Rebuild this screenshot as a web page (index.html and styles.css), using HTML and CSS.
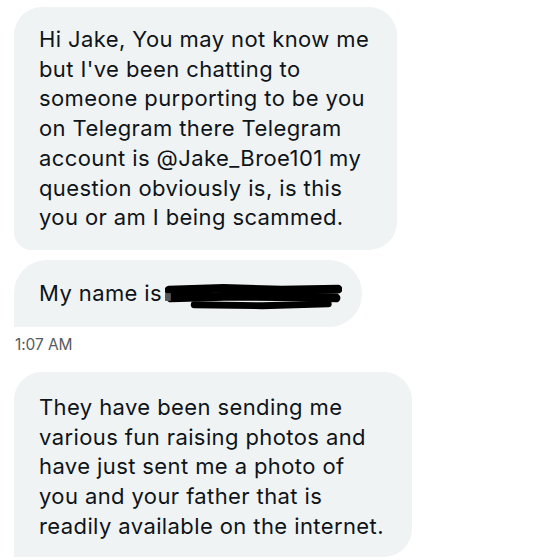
FILE: index.html
```html
<!DOCTYPE html>
<html>
	<head>
		<meta charset="utf-8" />
		<title>Messages</title>
		<link rel="stylesheet" href="styles.css">
	</head>
	<body>
		<div class="chat">
			<div class="bubble first">
				Hi Jake, You may not know me<br>
				but I've been chatting to<br>
				someone purporting to be you<br>
				on Telegram there Telegram<br>
				account is @Jake_Broe101 my<br>
				question obviously is, is this<br>
				you or am I being scammed.
			</div>
			<div class="bubble name">
				<span>My name is</span>
				<svg class="redact" width="182" height="32" viewBox="0 0 182 32">
					<path d="M4 9 L60 7 L120 9 L178 8" stroke="#000" stroke-width="9" fill="none" stroke-linecap="round" />
					<path d="M6 17 L70 15 L140 16 L176 17" stroke="#000" stroke-width="9" fill="none" stroke-linecap="round" />
					<path d="M30 24 L100 25 L168 23" stroke="#000" stroke-width="7" fill="none" stroke-linecap="round" />
					<rect x="0" y="12" width="6" height="8" fill="#555" />
				</svg>
			</div>
			<div class="time">1:07 AM</div>
			<div class="bubble last">
				They have been sending me<br>
				various fun raising photos and<br>
				have just sent me a photo of<br>
				you and your father that is<br>
				readily available on the internet.
			</div>
		</div>
	</body>
</html>
```

FILE: styles.css
```css
* {
	margin: 0;
	padding: 0;
	box-sizing: border-box;
}

body {
	background: #fff;
	font-family: Inter, "Noto Sans", sans-serif;
	color: #0f1419;
}

.chat {
	display: flex;
	flex-direction: column;
	align-items: flex-start;
	padding: 7px 0 0 14px;
}

.bubble {
	background: #eff3f4;
	font-size: 22px;
	line-height: 29.7px;
	letter-spacing: 0.4px;
	white-space: nowrap;
	padding: 18px 20px 13px 25px;
}

.first {
	width: 383px;
	height: 243px;
	border-radius: 28px 28px 28px 18px;
}

.name {
	margin-top: 10px;
	width: 348px;
	height: 67px;
	border-radius: 33px 33px 33px 0;
	display: flex;
	align-items: center;
	padding-top: 0;
	padding-bottom: 0;
}

.redact {
	margin-left: 3px;
	margin-top: 6px;
}

.time {
	margin-top: 8px;
	font-size: 15.5px;
	line-height: 20px;
	color: #555b60;
	padding-left: 1px;
	letter-spacing: -0.1px;
}

.last {
	margin-top: 17px;
	width: 398px;
	height: 185px;
	border-radius: 28px 28px 28px 0;
	padding-top: 21px;
}
```
